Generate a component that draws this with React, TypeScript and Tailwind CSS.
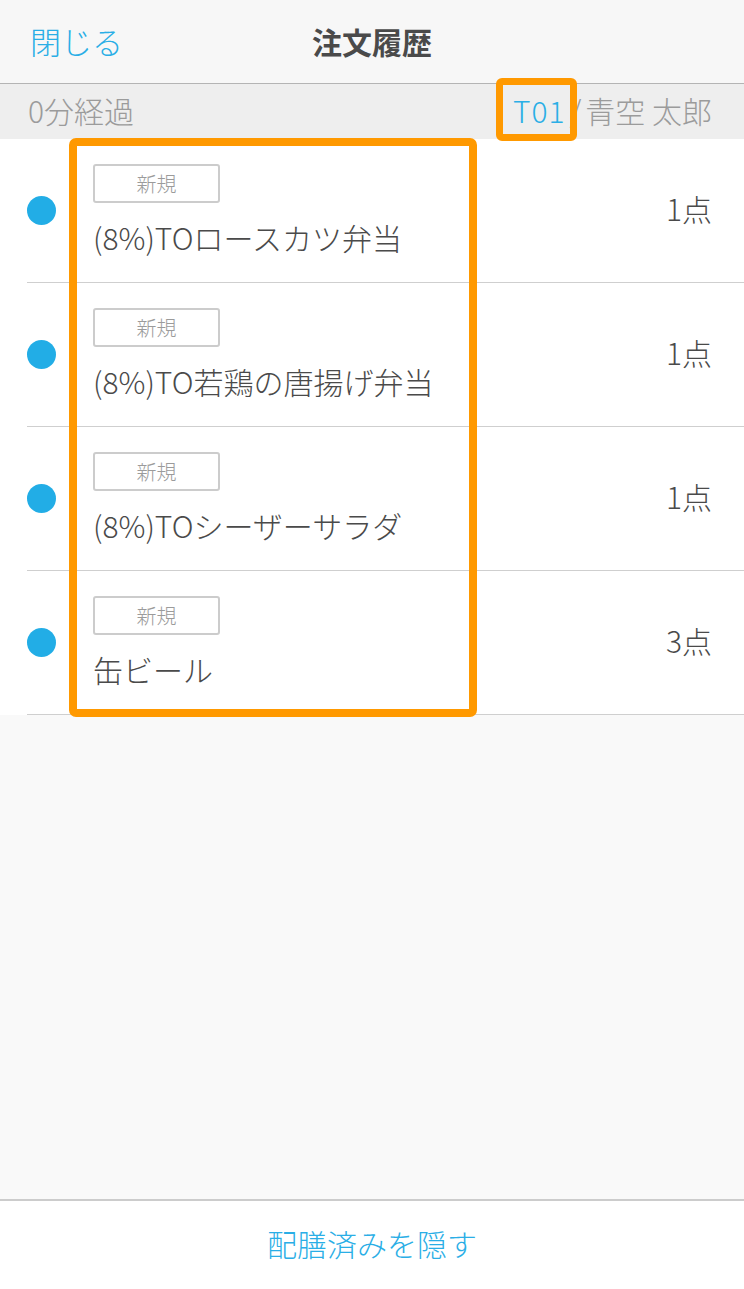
import React from "react";

const items = [
  { name: "(8%)TOロースカツ弁当", qty: "1点" },
  { name: "(8%)TO若鶏の唐揚げ弁当", qty: "1点" },
  { name: "(8%)TOシーザーサラダ", qty: "1点" },
  { name: "缶ビール", qty: "3点" },
];

const font = { fontFamily: '"Noto Sans CJK JP", "Noto Sans", sans-serif' };

export default function App() {
  return (
    <div className="relative flex h-[1289px] w-[744px] flex-col bg-[#f9f9f9]" style={font}>
      {/* Header */}
      <div className="relative flex h-[84px] shrink-0 items-center border-b border-[#b4b4b4] bg-[#f7f7f7] px-[30px] pb-[2px]">
        <span className="text-[31px] font-light leading-none text-[#2aaee6]">閉じる</span>
        <span className="absolute left-1/2 -translate-x-1/2 text-[30px] font-bold leading-none text-[#4a4a4a]">
          注文履歴
        </span>
      </div>

      {/* Sub bar */}
      <div className="flex h-[55px] shrink-0 items-center justify-between bg-[#eeeeee] pb-[4px] pl-[28px] pr-[32px] text-[30px] font-light leading-none text-[#9b9b9b]">
        <span>0分経過</span>
        <span className="flex items-center">
          <span className="tracking-[1px] text-[#2aaee6]">T01</span>
          <span className="mx-[4px]">/</span>
          <span>青空 太郎</span>
        </span>
      </div>

      {/* List */}
      <div className="relative bg-white">
        {items.map((it) => (
          <div key={it.name} className="ml-[27px] flex h-[144px] items-center border-b border-[#cfcfcf] pr-[32px]">
            <div className="h-[29px] w-[29px] shrink-0 rounded-full bg-[#22ade6]" />
            <div className="ml-[37px] flex flex-1 flex-col pb-[5px]">
              <div className="flex h-[39px] w-[127px] items-center justify-center rounded-[3px] border-2 border-[#cccccc] text-[20px] font-light leading-none text-[#9b9b9b]">
                新規
              </div>
              <div className="mt-[19px] text-[30px] font-light leading-none text-[#4a4a4a]">{it.name}</div>
            </div>
            <div className="pb-[5px] text-[30px] font-light leading-none text-[#4a4a4a]">{it.qty}</div>
          </div>
        ))}

        {/* annotation box around items */}
        <div className="absolute left-[69px] top-[-1px] h-[579px] w-[408px] rounded-[7px] border-8 border-[#ff9900]" />
      </div>

      <div className="flex-1" />

      {/* Footer */}
      <div className="flex h-[90px] shrink-0 items-center justify-center border-t-2 border-[#cccccc] bg-white pb-[4px]">
        <span className="text-[30px] font-light leading-none text-[#2aaee6]">配膳済みを隠す</span>
      </div>

      {/* annotation box around table no. */}
      <div className="absolute left-[496px] top-[78px] h-[63px] w-[81px] rounded-[6px] border-[7px] border-[#ff9900]" />
    </div>
  );
}
